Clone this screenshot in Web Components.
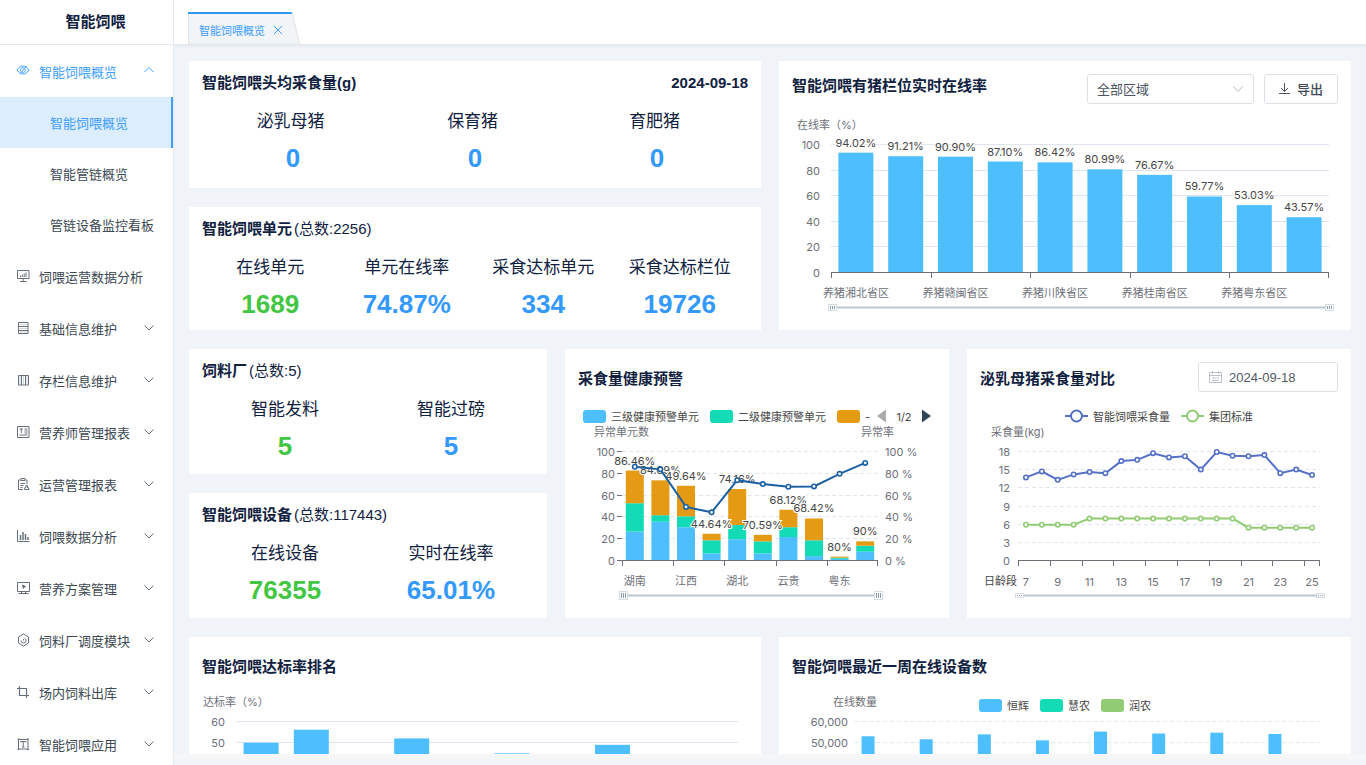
<!DOCTYPE html>
<html lang="zh-CN">
<head>
<meta charset="utf-8">
<title>智能饲喂</title>
<style>
html, body { margin: 0; height: 100%; }
body { font-family: "Liberation Sans", "Noto Sans CJK SC", sans-serif; font-size: 13px; color: #10213f; background: #f0f4f8; overflow: hidden; }
</style>
</head>
<body>
<feed-app></feed-app>

<template id="feed-app">
<style>
:host { display: flex; height: 100vh; }
side-nav { flex: none; width: 174px; }
main { flex: 1; min-width: 0; display: flex; flex-direction: column; }
.scroll { flex: 1; min-height: 0; overflow: auto; scrollbar-width: none; padding: 16px 15px 0; display: flex; flex-direction: column; gap: 19px; box-shadow: inset 0 3px 3px -2px #dfe5ea; }
.foot { flex: none; height: 11px; background: linear-gradient(#f7f7f7, #f0f4f8); }
.row { display: flex; gap: 18px; flex: none; }
.row > * { flex: 1 1 0; min-width: 0; }
.row > .narrow { flex-grow: 0; flex-basis: 30.8%; }
.stack { display: flex; flex-direction: column; gap: 19px; }
.roomy { --pad-end: 14px; }
.tight { --pad-end: 10px; }
.high { --title-line: 24px; }
</style>
<side-nav></side-nav>
<main>
  <tab-bar></tab-bar>
  <div class="scroll">
    <div class="row">
      <div class="stack">
        <stat-card class="roomy" heading="智能饲喂头均采食量(g)" date="2024-09-18">
          <stat-item label="泌乳母猪&nbsp;" value="0"></stat-item>
          <stat-item label="保育猪&nbsp;" value="0"></stat-item>
          <stat-item label="育肥猪&nbsp;" value="0"></stat-item>
        </stat-card>
        <stat-card class="tight" heading="智能饲喂单元" note="(总数:2256)">
          <stat-item label="在线单元" value="1689" good></stat-item>
          <stat-item label="单元在线率" value="74.87%"></stat-item>
          <stat-item label="采食达标单元" value="334"></stat-item>
          <stat-item label="采食达标栏位" value="19726"></stat-item>
        </stat-card>
      </div>
      <chart-card class="high" heading="智能饲喂有猪栏位实时在线率">
        <region-select slot="tools"></region-select>
        <export-button slot="tools"></export-button>
        <data-chart name="online"></data-chart>
      </chart-card>
    </div>
    <div class="row">
      <div class="stack narrow">
        <stat-card heading="饲料厂" note="(总数:5)">
          <stat-item label="智能发料" value="5" good></stat-item>
          <stat-item label="智能过磅" value="5"></stat-item>
        </stat-card>
        <stat-card heading="智能饲喂设备" note="(总数:117443)">
          <stat-item label="在线设备" value="76355" good></stat-item>
          <stat-item label="实时在线率" value="65.01%"></stat-item>
        </stat-card>
      </div>
      <chart-card heading="采食量健康预警">
        <data-chart name="health"></data-chart>
      </chart-card>
      <chart-card heading="泌乳母猪采食量对比">
        <date-field slot="tools" value="2024-09-18"></date-field>
        <data-chart name="intake"></data-chart>
      </chart-card>
    </div>
    <div class="row">
      <chart-card heading="智能饲喂达标率排名">
        <data-chart name="rank"></data-chart>
      </chart-card>
      <chart-card heading="智能饲喂最近一周在线设备数">
        <data-chart name="week"></data-chart>
      </chart-card>
    </div>
  </div>
  <div class="foot"></div>
</main>
</template>

<template id="side-nav">
<style>
:host { display: block; box-sizing: border-box; background: #fff; border-right: 1px solid #e4e9ee; overflow: hidden; }
h1 { margin: 0; height: 44px; line-height: 44px; padding-left: 18px; font-size: 15px; text-align: center; border-bottom: 1px solid #e6e9ee; }
</style>
<h1>智能饲喂</h1>
<nav aria-label="主菜单">
  <nav-item icon="eye" arrow="up" current>智能饲喂概览</nav-item>
  <nav-item sub selected>智能饲喂概览</nav-item>
  <nav-item sub>智能管链概览</nav-item>
  <nav-item sub>管链设备监控看板</nav-item>
  <nav-item icon="board">饲喂运营数据分析</nav-item>
  <nav-item icon="rows" arrow="down">基础信息维护</nav-item>
  <nav-item icon="cols" arrow="down">存栏信息维护</nav-item>
  <nav-item icon="report" arrow="down">营养师管理报表</nav-item>
  <nav-item icon="clip" arrow="down">运营管理报表</nav-item>
  <nav-item icon="bars" arrow="down">饲喂数据分析</nav-item>
  <nav-item icon="screen" arrow="down">营养方案管理</nav-item>
  <nav-item icon="hex" arrow="down">饲料厂调度模块</nav-item>
  <nav-item icon="crop" arrow="down">场内饲料出库</nav-item>
  <nav-item icon="text" arrow="down">智能饲喂应用</nav-item>
</nav>
</template>

<template id="nav-item">
<style>
:host { display: block; color: #3c4853; --ink: #64707b; }
:host([current]), :host([selected]) { color: #409eff; --ink: #409eff; }
a { display: flex; align-items: center; box-sizing: border-box; height: 52px; padding: 1px 19px 0 16px; color: inherit; text-decoration: none; white-space: nowrap; }
:host([current]) a { padding-top: 0; }
:host([sub]) a { height: 51px; padding: 0 0 1px 50px; }
:host([selected]) a { background: #dcedfe; border-right: 2px solid #409eff; }
.icon { width: 14px; height: 14px; margin-right: 9px; margin-bottom: 2px; }
.label { flex: 1; }
.arrow { width: 10px; height: 10px; margin-bottom: 2px; }
svg { display: block; fill: none; stroke: var(--ink); stroke-width: 1; }
</style>
<a href="#"><span class="label"><slot></slot></span></a>
</template>

<template id="tab-bar">
<style>
:host { display: flex; flex: none; align-items: flex-end; box-sizing: border-box; height: 45px; padding-left: 14px; background: #fff; border-bottom: 1px solid #e6e9ee; }
.tab { position: relative; display: flex; align-items: center; gap: 8px; height: 32px; width: 101px; padding: 0 0 0 11px; color: #409eff; font-size: 11px; }
.shape { position: absolute; inset: 0; width: 112px; height: 32px; }
a, button { position: relative; color: inherit; text-decoration: none; padding-top: 3px; }
button { border: 0; background: none; width: 10px; height: 13px; padding: 3px 0 0; }
button svg { display: block; }
</style>
<div class="tab">
  <svg class="shape" viewBox="0 0 112 32"><path d="M.5 0H104L111.500 32H.5z" fill="#f1f5f8" stroke="#dfe3e8"/><path d="M0 0h103.500l.6 2H0z" fill="#309bf5"/></svg>
  <a href="#">智能饲喂概览</a>
  <button type="button" aria-label="关闭"><svg width="10" height="10" viewBox="0 0 10 10"><path d="M1 1l8 8M9 1L1 9" stroke="#409eff" fill="none"/></svg></button>
</div>
</template>

<template id="stat-card">
<style>
:host { display: block; background: #fff; padding: 11px 13px var(--pad-end, 12px); }
header { display: flex; justify-content: space-between; font-size: 15px; line-height: 22px; font-weight: bold; }
h2 { display: flex; gap: 2px; margin: 0; font: inherit; }
.note { font-weight: normal; }
.items { display: flex; padding-top: 16px; }
</style>
<header><h2><span class="heading"></span><span class="note"></span></h2><time></time></header>
<div class="items"><slot></slot></div>
</template>

<template id="stat-item">
<style>
:host { display: block; flex: 1 1 0; text-align: center; white-space: nowrap; }
.label { font-size: 17px; line-height: 24px; }
.value { margin-top: 8px; font-size: 26px; line-height: 32px; font-weight: bold; color: #3399ff; }
:host([good]) .value { color: #43c643; }
</style>
<div class="label"></div><div class="value"></div>
</template>

<template id="chart-card">
<style>
:host { display: block; background: #fff; }
header { display: flex; gap: 10px; padding: 13px 13px 0; height: 30px; }
h2 { flex: 1; margin: 0; font-size: 15px; line-height: var(--title-line, 34px); white-space: nowrap; }
</style>
<header><h2></h2><slot name="tools"></slot></header>
<slot></slot>
</template>

<template id="region-select">
<style>
:host { display: block; position: relative; width: 167px; height: 30px; }
select { appearance: none; width: 100%; height: 100%; box-sizing: border-box; border: 1px solid #dcdfe6; border-radius: 3px; background: #fff; padding: 0 28px 0 9px; font: inherit; color: #4a5361; }
svg { position: absolute; right: 11px; top: 10px; pointer-events: none; }
</style>
<select aria-label="区域"><option>全部区域</option></select>
<svg width="10" height="10" viewBox="0 0 10 10"><path d="M.5 2.500L5 7.500l4.500-5" fill="none" stroke="#b4b9c2"/></svg>
</template>

<template id="export-button">
<style>
:host { display: block; }
button { display: flex; align-items: center; gap: 7px; height: 30px; box-sizing: border-box; padding: 0 14px 1px; border: 1px solid #dcdfe6; border-radius: 3px; background: #fff; font: inherit; font-weight: 500; color: #3f4856; }
</style>
<button type="button"><svg width="11" height="12" viewBox="0 0 11 12"><path d="M5.500 0v8.500M2 5l3.500 3.500L9 5M0 10.500h11" fill="none" stroke="#4a5361"/></svg>导出</button>
</template>

<template id="date-field">
<style>
:host { display: block; position: relative; width: 140px; height: 30px; }
input { width: 100%; height: 100%; box-sizing: border-box; border: 1px solid #dcdfe6; border-radius: 3px; background: #fff; padding: 0 8px 0 30px; font: inherit; color: #4f5966; }
svg { position: absolute; left: 11px; top: 8px; }
</style>
<input type="text" aria-label="日期">
<svg width="13" height="13" viewBox="0 0 13 13" fill="none" stroke="#b9bec7"><path d="M.5 2.500h12v10H.5zM.5 5.500h12M3.500 1v3M9.500 1v3"/><path d="M3 8h7M3 10.500h7" stroke-dasharray="2 .5"/></svg>
</template>

<template id="data-chart">
<style>
:host { display: block; height: 226px; }
svg { display: block; width: 100%; height: 100%; font-family: Inter, "Noto Sans CJK SC", sans-serif; font-size: 11px; }
.axis { fill: #6e7079; }
.dark { fill: #464646; }
.halo { paint-order: stroke; stroke: #fff; stroke-width: 2px; }
</style>
<svg role="img"></svg>
</template>

<script>
const chevron = {
  up: '<path d="M.5 7L5 2.500 9.500 7"/>',
  down: '<path d="M.5 2.500L5 7l4.500-4.500"/>'
};
const icons = {
  eye: '<path d="M1 7c2-3 4-4 6-4s4 1 6 4c-2 3-4 4-6 4s-4-1-6-4z"/><path d="M5 8.500a2.300 2.300 0 0 1 3-3.400M9 5.800a2.300 2.300 0 0 1-3 3.300M10.500 3l-6.500 8"/>',
  board: '<path d="M1.500 1.500h11.500v8H1.500zM7.200 9.500v3M4 12.500h6.500"/><path d="M4.500 6.500v1.500M6.300 5.500v2.500M8.200 4.500v3.500M10 3.500v4.500"/>',
  rows: '<path d="M2.500 1.500h9.500v11H2.500zM2.500 5.500h9.500M2.500 9.500h9.500"/><path d="M3.500 3.500h8M3.500 7.500h8M3.500 11h8" opacity=".3"/>',
  cols: '<path d="M2.500 2.500h10v9.500h-10zM5.500 2.500v9.500M9.500 2.500v9.500"/><path d="M4 3v8M7.500 3v8M11 3v8" opacity=".3"/>',
  report: '<path d="M1.500 1.500h11.500v11H1.500z"/><path d="M3.500 4h3.500M5.300 4v4M8.500 4h3M8.500 6h3M8.500 8h3M3.500 10h8"/>',
  clip: '<path d="M5 3H2.500v9.500H7M9.500 3H11v4M5 1.500h4v2H5zM4.500 6.500h4.500M4.500 8.500h3M4.500 10.500h2"/><path d="M8.500 12.500h4.500l-.5-2h-1V8.500h-1.500v2H9z"/>',
  bars: '<path d="M1.500 1v11.500H13.500"/><path d="M4.500 6v5M7 3v8M9.500 5v6M12 8v3" stroke-width="1.500"/>',
  screen: '<path d="M1.500 1.500h12v9h-12zM5.500 10.500v2M9.500 10.500v2M2.500 12.500H12.500"/><path d="M6.500 4l3 1.500-1.500.8-.6 1.200z" fill="#64707b"/>',
  hex: '<path d="M7.500 1l5 3v6l-5 3-5-3V4z"/><path d="M5 7.500a2.500 2.500 0 0 0 5 0 2.500 2.500 0 0 0-1.500-2.300M7.500 7.500V6"/>',
  crop: '<path d="M3.500 1v9.500H13M1 3.500h9.500V13" stroke-width="1.200"/>',
  text: '<path d="M2.500 2.500h9.500v9.500H2.500z"/><path d="M4.500 5.500V4.500h5.500v1M7.200 4.500v5.500M6 10h2.500M1.500 2h2M11 2h2M1.500 12.500h2M11 12.500h2"/>'
};

const blue = '#4dbfff', teal = '#13dbb5', orange = '#e49b13', green = '#91cc75';
const charts = {
  online: {
    left: 52, right: 22, top: 41, bottom: 169, max: 100, step: 20, labelGap: 11,
    names: [{ text: '在线率（%）', x: 18, y: 21 }],
    cats: ['养猪湘北省区', , '养猪赣闽省区', , '养猪川陕省区', , '养猪桂南省区', , '养猪粤东省区', ,],
    barWidth: 35, handle: [9, 6],
    stacks: [[94.02], [91.21], [90.90], [87.10], [86.42], [80.99], [76.67], [59.77], [53.03], [43.57]],
    colors: [blue],
    captions: ['94.02%', '91.21%', '90.90%', '87.10%', '86.42%', '80.99%', '76.67%', '59.77%', '53.03%', '43.57%']
  },
  health: {
    left: 57, right: 71, top: 60, bottom: 169, max: 100, step: 20, labelGap: 7, dashed: true, yTicks: true, percent: true,
    names: [{ text: '异常单元数', x: 29, y: 40 }, { text: '异常率', fromRight: 88, y: 40 }],
    cats: ['湖南', , '江西', , '湖北', , '云贵', , '粤东', ,],
    barWidth: 18, handle: [9, 8],
    stacks: [[27, 26, 30], [36, 6, 32], [31, 10, 28], [7, 12, 6], [20, 13, 33], [7, 11, 6], [22, 9, 16], [4.5, 14.5, 20], [2, 1, 1], [8.5, 5.5, 4]],
    colors: [blue, teal, orange],
    captions: ['86.46%', '84.09%', '49.64%', '44.64%', '74.16%', '70.59%', '68.12%', '68.42%', '80%', '90%'],
    lines: [{ color: '#1b5fa3', data: [86.46, 84.09, 49.64, 44.64, 74.16, 70.59, 68.12, 68.42, 80, 90] }],
    legend: { x: 18, y: 24, pager: '1/2', items: [['三级健康预警单元', blue], ['二级健康预警单元', teal], ['-', orange]] }
  },
  intake: {
    left: 51, right: 31, top: 60, bottom: 169, max: 18, step: 3, labelGap: 8, dashed: true,
    names: [{ text: '采食量(kg)', x: 24, y: 40 }, { text: '日龄段', x: 17, y: 189, dark: true }],
    cats: ['7', , '9', , '11', , '13', , '15', , '17', , '19', , '21', , '23', , '25'],
    handle: [9, 4], catY: 21,
    lines: [
      { color: '#5470c6', data: [13.8, 14.8, 13.4, 14.3, 14.7, 14.5, 16.5, 16.7, 17.8, 17.1, 17.3, 15.1, 18, 17.4, 17.3, 17.5, 14.5, 15.1, 14.2] },
      { color: green, data: [6, 6, 6, 6, 7, 7, 7, 7, 7, 7, 7, 7, 7, 7, 5.5, 5.5, 5.5, 5.5, 5.5] }
    ],
    legend: { y: 24, ring: true, items: [['智能饲喂采食量', '#5470c6'], ['集团标准', green]] }
  },
  rank: {
    left: 47, right: 23, top: 42, bottom: 170, max: 60, step: 10, labelGap: 11,
    names: [{ text: '达标率（%）', x: 14, y: 22 }],
    cats: new Array(10), barWidth: 35,
    stacks: [[50.3], [56.4], [42], [52.3], [41], [45.3], [40], [49.3], [39], [38]],
    colors: [blue]
  },
  week: {
    left: 76, right: 31, top: 42, bottom: 170, max: 60000, step: 10000, labelGap: 7, dashed: true,
    names: [{ text: '在线数量', x: 54, y: 22 }],
    cats: new Array(8), barWidth: 13, barShift: -16,
    stacks: [[53300], [51900], [54200], [51400], [55500], [54600], [55000], [54400]],
    colors: [blue],
    legend: { y: 25, items: [['恒辉', blue], ['慧农', teal], ['润农', green]] }
  }
};

function text(x, y, s, cls = 'axis', anchor = 'start') {
  return `<text x="${x}" y="${y + 4}" class="${cls}" text-anchor="${anchor}">${s}</text>`;
}

function drawLegend(g, width) {
  const widths = g.items.map(([s]) => 28 + s.length * 11);
  const total = widths.reduce((a, b) => a + b, 0) + 11 * (widths.length - 1);
  let x = g.x ?? Math.round((width - total) / 2);
  let out = '';
  g.items.forEach(([s, c], i) => {
    out += g.ring
      ? `<path d="M${x} ${g.y}h23" stroke="${c}" stroke-width="2"/><circle cx="${x + 11.5}" cy="${g.y}" r="5.500" fill="#fff" stroke="${c}" stroke-width="2"/>`
      : `<rect x="${x}" y="${g.y - 6}" width="23" height="13" rx="3" fill="${c}"/>`;
    out += text(x + 28, g.y + 1, s, 'dark');
    x += widths[i] + 11;
  });
  if (g.pager) {
    const r = width - 18;
    out += `<path d="M${r - 45} ${g.y - 6.5}v13l-9-6.500z" fill="#aaa"/><path d="M${r - 9} ${g.y - 6.5}v13l9-6.500z" fill="#2f4554"/>`;
    out += text(r - 27, g.y + 1, g.pager, 'dark', 'middle');
  }
  return out;
}

function drawChart(c, width) {
  const x0 = c.left, x1 = width - c.right, n = c.cats.length, band = (x1 - x0) / n;
  const yOf = v => c.bottom - v / c.max * (c.bottom - c.top);
  const mid = i => x0 + band * (i + .5);
  let out = '';
  for (let v = 0; v <= c.max; v += c.step) {
    const y = Math.round(yOf(v)) - .5;
    if (v) out += `<path d="M${x0} ${y}H${x1}" stroke="#e0e6f1"${c.dashed ? ' stroke-dasharray="4 3"' : ''}/>`;
    if (c.yTicks) out += `<path d="M${x0 - 5} ${y}h5" stroke="#6e7079"/>`;
    out += text(x0 - c.labelGap, y + .5, v.toLocaleString('en-US'), 'axis', 'end');
    if (c.percent) out += text(x1 + 7, y + .5, v + ' %');
  }
  (c.stacks || []).forEach((parts, i) => {
    let base = 0;
    parts.forEach((v, k) => {
      out += `<rect x="${mid(i) + (c.barShift || 0) - c.barWidth / 2}" y="${yOf(base + v)}" width="${c.barWidth}" height="${yOf(base) - yOf(base + v)}" fill="${c.colors[k]}"/>`;
      base += v;
    });
  });
  (c.captions || []).forEach((s, i) => {
    out += text(mid(i), yOf(c.stacks[i].reduce((a, b) => a + b, 0)) - 10, s, 'dark halo', 'middle');
  });
  out += `<path d="M${x0} ${c.bottom - .5}H${x1}" stroke="#6e7079"/>`;
  for (let i = 0; i < n; i += 2) out += `<path d="M${Math.round(x0 + band * i) + .5} ${c.bottom}v5" stroke="#6e7079"/>`;
  out += `<path d="M${Math.round(x1) - .5} ${c.bottom}v5" stroke="#6e7079"/>`;
  c.cats.forEach((s, i) => { out += text(mid(i), c.bottom + (c.catY || 20), s, 'axis', 'middle'); });
  (c.lines || []).forEach(l => {
    out += `<polyline points="${l.data.map((v, i) => mid(i) + ',' + yOf(v)).join(' ')}" fill="none" stroke="${l.color}" stroke-width="2"/>`;
    out += l.data.map((v, i) => `<circle cx="${mid(i)}" cy="${yOf(v)}" r="2.200" fill="#fff" stroke="${l.color}" stroke-width="1.600"/>`).join('');
  });
  c.names.forEach(t => { out += text(t.x ?? width - t.fromRight, t.y, t.text, t.dark ? 'dark' : 'axis'); });
  if (c.handle) {
    const [w, h] = c.handle, y = c.bottom + 35;
    out += `<path d="M${x0} ${y - .5}H${x1}" stroke="#b9c6d6" stroke-width="2"/>`;
    [x0 + 1, Math.round(x1)].forEach(x => {
      const cx = x + .5, top = y - h / 2 - .5;
      out += `<rect x="${cx - (w - 1) / 2 - .5 + .5}" y="${top}" width="${w - 1}" height="${h}" fill="#fff" stroke="#d3dbe5"/>`;
      out += `<path d="M${cx - 2} ${top + 1.5}v${h - 3}M${cx} ${top + 1.5}v${h - 3}M${cx + 2} ${top + 1.5}v${h - 3}" stroke="#8b9bb0" fill="none"/>`;
    });
  }
  if (c.legend) out += drawLegend(c.legend, width);
  return out;
}

class Base extends HTMLElement {
  constructor() {
    super();
    this.attachShadow({ mode: 'open' }).append(document.getElementById(this.localName).content.cloneNode(true));
  }
  find(selector) { return this.shadowRoot.querySelector(selector); }
}

class NavItem extends Base {
  connectedCallback() {
    const link = this.find('a');
    const icon = this.getAttribute('icon'), arrow = this.getAttribute('arrow');
    if (icon) link.insertAdjacentHTML('afterbegin', `<svg class="icon" viewBox="0 0 14 14" aria-hidden="true">${icons[icon]}</svg>`);
    if (arrow) link.insertAdjacentHTML('beforeend', `<svg class="arrow" viewBox="0 0 10 10" aria-hidden="true">${chevron[arrow]}</svg>`);
    if (this.hasAttribute('selected')) link.setAttribute('aria-current', 'page');
  }
}

class StatCard extends Base {
  connectedCallback() {
    this.find('.heading').textContent = this.getAttribute('heading');
    this.find('.note').textContent = this.getAttribute('note') || '';
    this.find('time').textContent = this.getAttribute('date') || '';
  }
}

class StatItem extends Base {
  connectedCallback() {
    this.find('.label').textContent = this.getAttribute('label');
    this.find('.value').textContent = this.getAttribute('value');
  }
}

class ChartCard extends Base {
  connectedCallback() { this.find('h2').textContent = this.getAttribute('heading'); }
}

class DateField extends Base {
  connectedCallback() { this.find('input').value = this.getAttribute('value'); }
}

class DataChart extends Base {
  connectedCallback() {
    this.draw();
    this.observer = new ResizeObserver(() => this.draw());
    this.observer.observe(this);
  }
  disconnectedCallback() { this.observer.disconnect(); }
  draw() {
    const width = this.clientWidth;
    if (width) this.find('svg').innerHTML = drawChart(charts[this.getAttribute('name')], width);
  }
}

customElements.define('nav-item', NavItem);
customElements.define('side-nav', class extends Base {});
customElements.define('tab-bar', class extends Base {});
customElements.define('stat-item', StatItem);
customElements.define('stat-card', StatCard);
customElements.define('region-select', class extends Base {});
customElements.define('export-button', class extends Base {});
customElements.define('date-field', DateField);
customElements.define('data-chart', DataChart);
customElements.define('chart-card', ChartCard);
customElements.define('feed-app', class extends Base {});
</script>
</body>
</html>
